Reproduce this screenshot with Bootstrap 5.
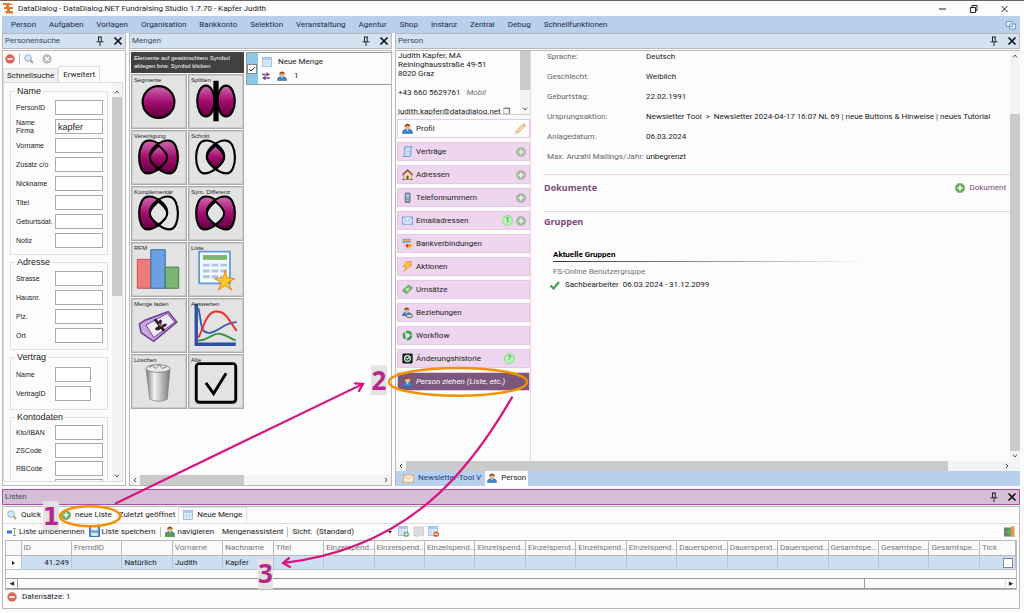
<!DOCTYPE html>
<html lang="de">
<head>
<meta charset="utf-8">
<meta name="viewport" content="width=device-width, initial-scale=1">
<title>DataDialog</title>
<link href="https://cdn.jsdelivr.net/npm/bootstrap@5.3.0/dist/css/bootstrap.min.css" rel="stylesheet">
<style>
:root{--line:#b9b9b9;--blue:#b8d0eb;--head:#d3e3f2;--thumb:#cbcacb}
body{font:8px/12px Roboto,"Open Sans",sans-serif;color:#222;background:#fcfcfc;overflow:hidden}
button,input,select{font:inherit;color:inherit}
button{border:0;background:none;padding:0;text-align:left;white-space:nowrap}
svg{display:block;flex:none}
.app{border-top:1px solid #666}
.titlebar{height:15px;padding:0 14px 0 3px}
.menubar{height:17px;margin:0 4px 0 2px;padding-left:9px;gap:13px;background:var(--blue)}
.menubar a{color:#1d2b45;text-decoration:none}
.docks{gap:3px;margin:0 4px 3px 2px}
.dock{min-width:0;min-height:0}
.dock-head{height:16px;flex:none;padding:0 2px 0 2px;background:var(--head);border:1px solid var(--line);color:#3a4656}
.dock-body{border:1px solid var(--line);margin-top:1px;min-height:0}
.tools{gap:9px}
.dock-search{width:124px}
.dock-sets{width:263px}
.vbar{width:10px;flex:none;background:#f4f4f4}
.vbar i,.hbar i{display:block;background:var(--thumb)}
.hbar{height:10px;flex:none;background:#f4f4f4}
.hbar i{height:10px}
.end{width:10px;height:10px}
.search-tools{height:16px;padding:0 2px;gap:4px}
.rule{width:1px;height:10px;background:#bbb}
.tab-off{height:14px;padding:0 3px;background:#f1f1f1;border:1px solid #ddd;border-bottom:0}
.tab-on{height:16px;padding:0 4px;background:#fcfcfc;border:1px solid #ddd;border-bottom:0}
.sheet{border:1px solid #ddd;min-height:0;margin:0 2px 3px 0}
.fields{font:7px/8px "Liberation Sans",Arial,sans-serif;padding:3px 4px 0 6px}
.fields fieldset{border:1px solid #e0e0e0;padding:4px 3px 6px 5px;margin-bottom:2px;min-width:0}
.fields legend{float:none;width:auto;font-size:9px;line-height:10px;padding:0 2px;margin:0 0 0 -1px}
.field{height:15px;margin-bottom:4px}
.field:last-child{margin-bottom:0}
.field label{width:39px;flex:none;white-space:nowrap}
.field input{height:15px;width:48px;min-width:0;border:1px solid #aaa;background:#fff;padding:0 2px;border-radius:0;font-size:9px}
.field .short{width:36px}
.fields .roomy{padding-top:5px;padding-bottom:8px}
.fields .tight{padding-top:3px}
.tight .field{margin-bottom:3px}
.set-tools{width:113px;font:6px/8px "Liberation Sans",Arial,sans-serif}
.hint{background:#414141;color:#fff;padding:2px 3px;height:21px}
.tiles{display:grid;grid-template-columns:1fr 1fr;gap:1px;margin-top:1px}
.tile{position:relative;height:55px;border:1px solid #aaa;outline:1px solid #ccc;outline-offset:-2px;background:#e3e3e3}
.tile span{position:absolute;left:2px;top:1px;z-index:1}
.tile svg{width:100%;height:100%}
.set-item{height:33px;border:1px solid #999;border-right:0}
.set-check{width:11px;background:#8cc8e8}
input[type=checkbox]{appearance:none;margin:0;width:10px;height:10px;flex:none;border:1px solid #888;background:#fff}
input[type=checkbox]:checked{background:#fff url("data:image/svg+xml,%3Csvg xmlns='http://www.w3.org/2000/svg' viewBox='0 0 8 8'%3E%3Cpath d='M1 4l2 2 4-4' fill='none' stroke='%23222'/%3E%3C/svg%3E")}
.person-nav{width:135px;border-right:1px solid #eed6ee}
.address{height:64px;overflow:hidden;line-height:9px;border-bottom:1px solid #ccc}
.address p{margin:0 0 10px 2px;white-space:nowrap}
.nav-list{padding-top:4px}
.nav-btn{height:19px;margin:0 0 4px 1px;padding:0 3px 0 4px;gap:3px;background:#efd6ef;border:1px solid #e6c8e6;display:flex;align-items:center;width:133px}
.nav-btn svg:first-child{width:11px;height:11px}
.nav-btn.plain{background:#fdfdfd}
.nav-btn.dark{background:#7c577c;color:#fff;font-style:italic}
.count{width:11px;height:11px;border-radius:50%;background:#b4f5b4;border:1px solid #8edb8e;font-size:7px;line-height:9px;text-align:center;color:#2a6b2a}
.facts{display:grid;grid-template-columns:99px 1fr;row-gap:8px;margin:0 0 0 16px}
.facts dt{font-weight:400;color:#666}
.facts dd{margin:0;white-space:nowrap}
.block-head{border-top:1px solid #ead2ea;margin-left:13px;color:#7a4a7a}
.block-head h2{font:700 9px/12px "Open Sans",sans-serif;margin:0}
.docs-head{margin-top:11px;padding:7px 0 17px}
.groups{margin:21px 0 0 22px}
.groups h3{font-size:8px;line-height:12px;font-weight:700;margin:0;color:#000}
.fade-line{height:1px;width:320px;max-width:100%;background:linear-gradient(90deg,#333,#aaa 60%,#fff)}
.group-name{margin:4px 0 1px}
.group-role{gap:5px;margin-left:-4px}
.doc-tabs{height:15px;background:var(--blue);padding-left:7px;color:#1c3a8c}
.doc-tabs .active-doc{background:#fcfcfc;color:#222;height:15px;padding:0 2px}
.lists{margin:0 4px 4px 2px}
.lists .dock-head{background:#d6bfd6;border:1px solid #a94fa9}
.list-tabs{height:17px;border-bottom:1px solid #ddd;gap:3px}
.list-tools{height:16px}
.list-tools select{appearance:none;border:0;background:none;width:70px;padding:0}
.grid-box{margin:0 2px;border:1px solid var(--line)}
.grid-box table{table-layout:fixed;width:100%;border-collapse:collapse;line-height:12px}
.grid-box th{font-weight:400;color:#777;border:solid var(--line);border-width:0 1px 1px 0;height:15px;padding:0 0 0 2px;white-space:nowrap;background:#fafafa}
.grid-box td{background:#cdddf2;border:solid #b9c4d4;border-width:0 1px 1px 0;height:14px;padding:0 2px;white-space:nowrap}
.grid-box td:first-child{background:#fcfcfc}
.grid-scroll{height:11px;margin-top:8px;border:1px solid #999;border-width:1px 0}
.grid-scroll i{flex:0 0 84%;border:solid #999;border-width:0 1px}
.grid-scroll b{width:11px;flex:none;text-align:center;font-size:5px;line-height:9px}
.status{gap:5px;padding:1px 0 5px 4px}
.marks{position:absolute;inset:0;width:100%;height:100%;pointer-events:none}
</style>
</head>
<body>
<svg width="0" height="0" class="position-absolute" aria-hidden="true">
<defs>
<linearGradient id="mg" x1="0" y1="0" x2="0" y2="1"><stop offset="0" stop-color="#cf6cae"/><stop offset=".5" stop-color="#a50d70"/><stop offset="1" stop-color="#5e003f"/></linearGradient>
<linearGradient id="can" x1="0" x2="1"><stop offset="0" stop-color="#777"/><stop offset=".35" stop-color="#f4f4f4"/><stop offset="1" stop-color="#777"/></linearGradient>
<symbol id="pin" viewBox="0 0 8 10"><path d="M2 1h4M2.500 1v4.500M5.200 1v4.500M.5 5.800h7M4 6v4" stroke="#222" fill="none"/></symbol>
<symbol id="x" viewBox="0 0 10 10"><path d="M1.500 1.500l7 7M8.500 1.500l-7 7" stroke="#111" stroke-width="1.700"/></symbol>
<symbol id="minus" viewBox="0 0 10 10"><circle cx="5" cy="5" r="4.700" fill="#e2645c"/><path d="M2.500 5h5" stroke="#fff" stroke-width="1.800"/></symbol>
<symbol id="plus" viewBox="0 0 10 10"><circle cx="5" cy="5" r="4.600" fill="#69b45a" stroke="#4b8d42" stroke-width=".5"/><path d="M2.500 5h5M5 2.500v5" stroke="#fff" stroke-width="1.600"/></symbol>
<symbol id="plusg" viewBox="0 0 10 10"><circle cx="5" cy="5" r="4.600" fill="#a9bba5" stroke="#98a894" stroke-width=".5"/><path d="M2.500 5h5M5 2.500v5" stroke="#eef3ec" stroke-width="1.600"/></symbol>
<symbol id="off" viewBox="0 0 10 10"><circle cx="5" cy="5" r="4.700" fill="#b9b9b9"/><path d="M3 3l4 4M7 3l-4 4" stroke="#fff" stroke-width="1.300"/></symbol>
<symbol id="lens" viewBox="0 0 10 10"><path d="M6 6l3 3" stroke="#c49a6a" stroke-width="2"/><circle cx="4" cy="4" r="3.300" fill="#d5e9fb" stroke="#8bb3dc"/></symbol>
<symbol id="man" viewBox="0 0 10 10"><path d="M.5 9.500C.3 6.500 2 5.500 5 5.500s4.700 1 4.500 4z" fill="#3f86cf" stroke="#245b9a" stroke-width=".5"/><path d="M4 5.500l1 2 1-2z" fill="#fff"/><circle cx="5" cy="3.300" r="2.500" fill="#f0b57c"/><path d="M2.300 3.500C2-.4 8-.4 7.700 3.500 6.500 2 4.500 2.500 2.300 3.500z" fill="#8a4f1c"/></symbol>
<symbol id="rel" viewBox="0 0 10 10"><use href="#man" width="8.500" height="8.500"/><rect x="4" y="6.500" width="5.500" height="3" rx="1.500" fill="#ddd" stroke="#555" stroke-width=".8"/></symbol>
<symbol id="navi" viewBox="0 0 10 10"><use href="#man" width="9" height="9"/><path d="M0 6h6l3 3v1H0z" fill="#58a045"/></symbol>
<symbol id="tbl" viewBox="0 0 10 10"><rect x=".5" y=".5" width="9" height="9" fill="#e6f1fc" stroke="#8fb5df" stroke-width=".8"/><path d="M1 2h8" stroke="#9fc0e6" stroke-width="1.600"/><path d="M3.500 3v6M6.500 3v6M1 5h8M1 7h8" stroke="#b5d0ec" stroke-width=".6"/></symbol>
<symbol id="tbladd" viewBox="0 0 10 10"><use href="#tbl" width="9" height="9"/><use href="#plus" x="5" y="5" width="5" height="5"/></symbol>
<symbol id="tbldel" viewBox="0 0 10 10"><use href="#tbl" width="9" height="9"/><circle cx="7.500" cy="7.500" r="2.500" fill="#e0622c"/><path d="M6 7.500h3" stroke="#fff"/></symbol>
<symbol id="swap" viewBox="0 0 8 10"><path d="M0 3.500h5M3 7H8" stroke="#7c4a8c" stroke-width="1.600"/><path d="M4.500 1L8 3.500 4.500 5.500zM3.500 4.500L0 7l3.500 2.500z" fill="#7c4a8c"/></symbol>
<symbol id="pen" viewBox="0 0 10 10"><path d="M.5 9.500l1-3L7.500.8l2 2L3.500 8.500z" fill="#f3d9a0" stroke="#cfa566" stroke-width=".6"/><path d="M7 1.300L8 .3l2 2-1 1z" fill="#e9a3a0"/></symbol>
<symbol id="scroll" viewBox="0 0 10 10"><path d="M2.500.8h7L8 2v6.500L6.500 9.500H.8L2.500 8z" fill="#d5e8fb" stroke="#5a8fc9" stroke-width=".8"/><path d="M4 3h3M4 5h3M4 7h3" stroke="#8fb8e4" stroke-width=".6"/></symbol>
<symbol id="house" viewBox="0 0 10 10"><path d="M1.500 5L5 2l3.500 3v4.500h-7z" fill="#f2e2c4" stroke="#7a6a4a" stroke-width=".5"/><path d="M.3 5.500L5 1l4.700 4.500" fill="none" stroke="#a8502c" stroke-width="1.400"/><rect x="4" y="6" width="2" height="3.500" fill="#7b4a22"/><path d="M0 9.500h3M7 9.500h3" stroke="#4f9d3d"/></symbol>
<symbol id="phone" viewBox="0 0 10 10"><rect x="2.800" y=".8" width="4.600" height="8.800" rx=".8" fill="#7c8896" stroke="#4d5762" stroke-width=".5"/><rect x="3.600" y="2" width="3" height="3" fill="#8fd0f5"/><path d="M3.600 6.200h3M3.600 7.700h3" stroke="#ccc" stroke-width=".7"/></symbol>
<symbol id="mail" viewBox="0 0 10 10"><rect x=".4" y="1.800" width="9.200" height="6.600" fill="#e6f2fd" stroke="#6d9ed0" stroke-width=".8"/><path d="M.8 2.300L5 5.800l4.200-3.500M.8 8l3-3M9.200 8l-3-3" fill="none" stroke="#6d9ed0" stroke-width=".7"/></symbol>
<symbol id="mailo" viewBox="0 0 10 10"><rect x=".4" y="1.800" width="9.200" height="6.600" fill="#fdf0dc" stroke="#e2a35d" stroke-width=".8"/><path d="M.8 2.300L5 5.800l4.200-3.500" fill="none" stroke="#e2a35d" stroke-width=".7"/></symbol>
<symbol id="bank" viewBox="0 0 10 10"><rect x=".5" y=".8" width="7.500" height="4" fill="#6ba6df"/><path d="M.5 2.200h7.500" stroke="#f6b04a"/><rect x="2.500" y="4.500" width="7" height="5" fill="#fff" stroke="#bbb" stroke-width=".5"/><circle cx="5" cy="7" r="1.800" fill="#dc3a33"/><circle cx="7.200" cy="7" r="1.800" fill="#f2a02e"/></symbol>
<symbol id="bolt" viewBox="0 0 10 10"><path d="M4 .5h5L6.800 3.500h2.400L1.500 9.700 4 5.500H.8z" fill="#fbbd3a" stroke="#e08c1c" stroke-width=".5"/></symbol>
<symbol id="cash" viewBox="0 0 10 10"><path d="M.5 6L6 1l3.500 2.500L4 9z" fill="#79c47b" stroke="#3f8f49" stroke-width=".7"/><circle cx="5" cy="5" r="1.300" fill="#cdeccb"/></symbol>
<symbol id="flow" viewBox="0 0 10 10"><circle cx="5" cy="5" r="3.300" fill="none" stroke="#24a53b" stroke-width="2.200" stroke-dasharray="5.600 1.300"/></symbol>
<symbol id="hist" viewBox="0 0 10 10"><rect x=".3" y=".5" width="9.400" height="9" rx="1" fill="#16211f"/><circle cx="5" cy="5" r="2.600" fill="none" stroke="#dfe"/><path d="M3.500 4.500l1.500 1L7.500 3" stroke="#dfe" fill="none"/></symbol>
<symbol id="ok" viewBox="0 0 10 10"><path d="M1 5.500l3 3L9.500 2" stroke="#3fa545" stroke-width="2.200" fill="none"/></symbol>
<symbol id="disk" viewBox="0 0 10 10"><rect x=".5" y=".5" width="9" height="9" rx=".5" fill="#5f9ad8" stroke="#3d72b4"/><rect x="2" y="1" width="6" height="3" fill="#e5f0fb"/><rect x="2" y="6" width="6" height="3" fill="#d9ecd0"/></symbol>
<symbol id="ren" viewBox="0 0 10 10"><rect x="0" y="3.500" width="5" height="3" fill="#3b78c4"/><path d="M6 1.500h3M7.500 1.500v7M6 8.500h3" stroke="#777" stroke-width=".7"/></symbol>
<symbol id="note" viewBox="0 0 10 10"><path d="M1 .8h8.500v8L7 8 4.500 9.500 1 9z" fill="#dcdcdc" stroke="#c2c2c2" stroke-width=".6"/></symbol>
<symbol id="door" viewBox="0 0 11 11"><rect x="0" y="1.500" width="7" height="9" fill="#6d8370"/><path d="M6.500 1l4-1v11l-4-.5z" fill="#d79a52"/><path d="M1 6h5M4 4l2.500 2L4 8" stroke="#4fc04f" stroke-width="1.500" fill="none"/></symbol>
<symbol id="up" viewBox="0 0 10 10"><path d="M3 6.500l2-2.500 2 2.500" fill="none" stroke="#555"/></symbol>
<symbol id="dn" viewBox="0 0 10 10"><path d="M3 3.500L5 6l2-2.500" fill="none" stroke="#555"/></symbol>
<symbol id="lt" viewBox="0 0 10 10"><path d="M6 3L4 5l2 2" fill="none" stroke="#444"/></symbol>
<symbol id="rt" viewBox="0 0 10 10"><path d="M4 3l2 2-2 2" fill="none" stroke="#444"/></symbol>
</defs>
</svg>

<div class="app vh-100 d-flex flex-column position-relative">
<header class="titlebar d-flex align-items-center flex-shrink-0">
<svg width="11" height="11" viewBox="0 0 11 11"><path d="M0 0h7l3 2H6v2H3V2H0zM1 4h9v2H7v2H4V6H1zM2 8h8v2.500H3z" fill="#e5792b"/></svg>
<span class="ms-1">DataDialog - DataDialog.NET Fundraising Studio 1.7.70 - Kapfer Judith</span>
<svg class="ms-auto" width="74" height="10" viewBox="0 0 74 10"><path d="M3 5h7M34.500 3.500h5v5h-5zM36 3.500v-2h5v5h-1.500M65.500 2l6 6M71.500 2l-6 6" fill="none" stroke="#222"/></svg>
</header>
<nav class="menubar d-flex align-items-center flex-shrink-0" id="menu">
<a href="#">Person</a><a href="#">Aufgaben</a><a href="#">Vorlagen</a><a href="#">Organisation</a><a href="#">Bankkonto</a><a href="#">Selektion</a><a href="#">Veranstaltung</a><a href="#">Agentur</a><a href="#">Shop</a><a href="#">Instanz</a><a href="#">Zentral</a><a href="#">Debug</a><a href="#">Schnellfunktionen</a>
<svg class="ms-auto me-1" width="10" height="10" viewBox="0 0 10 10"><path d="M.5 1.500h6v5h-6zM3.500 4h6v5h-6z" fill="#eaf3fc" stroke="#7b9fcb"/></svg>
</nav>

<main class="docks d-flex flex-grow-1 dock">
<section class="dock dock-search d-flex flex-column flex-shrink-0">
<div class="dock-head d-flex align-items-center"><span class="me-auto">Personensuche</span><div class="d-flex tools"><svg width="8" height="10"><use href="#pin"/></svg><svg width="10" height="10"><use href="#x"/></svg></div></div>
<div class="dock-body flex-grow-1 d-flex flex-column">
<div class="search-tools d-flex align-items-center"><svg width="10" height="10"><use href="#minus"/></svg><span class="rule"></span><svg width="10" height="10"><use href="#lens"/></svg><svg class="ms-1" width="10" height="10"><use href="#off"/></svg></div>
<div class="d-flex align-items-end"><button class="tab-off">Schnellsuche</button><button class="tab-on">Erweitert</button></div>
<div class="sheet flex-grow-1 d-flex">
<form class="fields flex-grow-1 overflow-hidden">
<fieldset><legend>Name</legend>
<div class="field d-flex align-items-center"><label for="f1">PersonID</label><input id="f1"></div>
<div class="field d-flex align-items-center"><label for="f2">Name<br>Firma</label><input id="f2" value="kapfer"></div>
<div class="field d-flex align-items-center"><label for="f3">Vorname</label><input id="f3"></div>
<div class="field d-flex align-items-center"><label for="f4">Zusatz c/o</label><input id="f4"></div>
<div class="field d-flex align-items-center"><label for="f5">Nickname</label><input id="f5"></div>
<div class="field d-flex align-items-center"><label for="f6">Titel</label><input id="f6"></div>
<div class="field d-flex align-items-center"><label for="f7">Geburtsdat.</label><input id="f7"></div>
<div class="field d-flex align-items-center"><label for="f8">Notiz</label><input id="f8"></div>
</fieldset>
<fieldset><legend>Adresse</legend>
<div class="field d-flex align-items-center"><label for="f9">Strasse</label><input id="f9"></div>
<div class="field d-flex align-items-center"><label for="f10">Hausnr.</label><input id="f10"></div>
<div class="field d-flex align-items-center"><label for="f11">Plz.</label><input id="f11"></div>
<div class="field d-flex align-items-center"><label for="f12">Ort</label><input id="f12"></div>
</fieldset>
<fieldset class="roomy"><legend>Vertrag</legend>
<div class="field d-flex align-items-center"><label for="f13">Name</label><input id="f13" class="short"></div>
<div class="field d-flex align-items-center"><label for="f14">VertragID</label><input id="f14" class="short"></div>
</fieldset>
<fieldset class="tight"><legend>Kontodaten</legend>
<div class="field d-flex align-items-center"><label for="f15">Kto/IBAN</label><input id="f15"></div>
<div class="field d-flex align-items-center"><label for="f16">ZSCode</label><input id="f16"></div>
<div class="field d-flex align-items-center"><label for="f17">RBCode</label><input id="f17"></div>
<div class="field d-flex align-items-center"><label></label><input aria-label="Konto"></div>
</fieldset>
</form>
<div class="vbar d-flex flex-column"><svg class="end mt-1" viewBox="0 0 10 10"><use href="#up"/></svg><i class="h-50"></i><svg class="end mt-auto" viewBox="0 0 10 10"><use href="#dn"/></svg></div>
</div>
</div>
</section>

<section class="dock dock-sets d-flex flex-column flex-shrink-0">
<div class="dock-head d-flex align-items-center"><span class="me-auto">Mengen</span><div class="d-flex tools"><svg width="8" height="10"><use href="#pin"/></svg><svg width="10" height="10"><use href="#x"/></svg></div></div>
<div class="dock-body flex-grow-1 d-flex flex-column">
<div class="d-flex flex-grow-1" style="gap:2px;padding:1px 0 0 1px">
<div class="set-tools flex-shrink-0">
<div class="hint">Elemente auf gewünschtem Symbol<br>ablegen bzw. Symbol klicken</div>
<div class="tiles">
<button class="tile"><span>Segmente</span><svg viewBox="0 0 55 55"><circle cx="27" cy="28" r="16.500" fill="url(#mg)" stroke="#000" stroke-width="2.200"/></svg></button>
<button class="tile"><span>Splitten</span><svg viewBox="0 0 55 55"><g fill="url(#mg)" stroke="#000" stroke-width="2.200"><ellipse cx="17" cy="27" rx="9" ry="16"/><ellipse cx="38" cy="27" rx="9" ry="16"/></g><path d="M27.500 6v42" stroke="#000" stroke-width="5.500"/></svg></button>
<button class="tile"><span>Vereinigung</span><svg viewBox="0 0 55 55"><g fill="url(#mg)" stroke="#000" stroke-width="2.200"><path d="M16 10C4 11 4 43 15 44c9 0 21-10 21-18S24 9 16 10z"/><path d="M38 10c12 1 12 33 1 34-9 0-21-10-21-18S30 9 38 10z"/><path d="M27 15c12 10 12 15 0 24-12-9-12-14 0-24z"/></g></svg></button>
<button class="tile"><span>Schnitt</span><svg viewBox="0 0 55 55"><g fill="none" stroke="#000" stroke-width="2.200"><path d="M27 15c12 10 12 15 0 24-12-9-12-14 0-24z" fill="url(#mg)"/><path d="M16 10C4 11 4 43 15 44c9 0 21-10 21-18S24 9 16 10z"/><path d="M38 10c12 1 12 33 1 34-9 0-21-10-21-18S30 9 38 10z"/></g></svg></button>
<button class="tile"><span>Komplementär</span><svg viewBox="0 0 55 55"><g fill="none" stroke="#000" stroke-width="2.200"><path d="M16 10C4 11 4 43 15 44c9 0 21-10 21-18S24 9 16 10z" fill="url(#mg)"/><path d="M38 10c12 1 12 33 1 34-9 0-21-10-21-18S30 9 38 10z"/><path d="M27 15c12 10 12 15 0 24-12-9-12-14 0-24z" fill="#e3e3e3"/></g></svg></button>
<button class="tile"><span>Sym. Differenz</span><svg viewBox="0 0 55 55"><g fill="url(#mg)" stroke="#000" stroke-width="2.200"><path d="M16 10C4 11 4 43 15 44c9 0 21-10 21-18S24 9 16 10z"/><path d="M38 10c12 1 12 33 1 34-9 0-21-10-21-18S30 9 38 10z"/><path d="M27 15c12 10 12 15 0 24-12-9-12-14 0-24z" fill="#e3e3e3"/></g></svg></button>
<button class="tile"><span>RFM</span><svg viewBox="0 0 55 55"><path d="M5 17h14v30H5z" fill="#f07a78" stroke="#cc4a48"/><path d="M19 7h15v40H19z" fill="#6a9fe0" stroke="#3465a8"/><path d="M34 25h14v22H34z" fill="#79b579" stroke="#3f7f42"/></svg></button>
<button class="tile"><span>Liste</span><svg viewBox="0 0 55 55"><path d="M10 9h32v33H10z" fill="#f5faff" stroke="#5b9bd5" stroke-width="1.800"/><path d="M14 15h25" stroke="#7fb56e" stroke-width="5"/><path d="M14 23h25M14 29h25M14 35h20" stroke="#a9c6e6" stroke-width="3" stroke-dasharray="7 2"/><path d="M37 28l2 8 8 1-7 4 4 8-7-5-7 5 3-8-7-4 9-1z" fill="#ffc928" stroke="#dd8a1c"/></svg></button>
<button class="tile"><span>Menge laden</span><svg viewBox="0 0 55 55"><path d="M7 26l6-4 24-9 9 11-24 20-13-9z" fill="#c9a6dc" stroke="#6c3a94" stroke-width="1.500"/><path d="M14 27l22-12 8 9-22 16z" fill="#f3ebf8" stroke="#6c3a94"/><path d="M24 22l8 10M25 31l9-4M29 23l-2 8" stroke="#222" stroke-width="3" stroke-linecap="round"/><path d="M27 26l4 2" stroke="#c65cab" stroke-width="2"/></svg></button>
<button class="tile"><span>Auswerten</span><svg viewBox="0 0 55 55" fill="none"><path d="M7 5v42h41" stroke="#2d509f" stroke-width="3.500"/><path d="M9 9c4 14 1 28 13 26 10-2 12-10 27-11" stroke="#3a5bb0" stroke-width="2"/><path d="M9 40C13 36 16 14 27 13s14 10 22 20" stroke="#f22a2a" stroke-width="2"/><path d="M9 43c12 0 14-8 22-7 9 1 10 5 17 7" stroke="#3d9440" stroke-width="2"/></svg></button>
<button class="tile"><span>Löschen</span><svg viewBox="0 0 55 55"><path d="M14 14l4 32q9 4 18 0l3-32z" fill="url(#can)" stroke="#777" stroke-width=".7"/><ellipse cx="26.500" cy="14" rx="12.500" ry="4" fill="#e9e9e9" stroke="#888"/><path d="M17 13l4-2 3 3 4-4 3 4 5-2" stroke="#777" fill="none"/></svg></button>
<button class="tile"><span>Alle</span><svg viewBox="0 0 55 55"><rect x="7" y="9" width="41" height="40" rx="3" fill="#e3e3e3" stroke="#000" stroke-width="3"/><path d="M17 29l8 11 13-21" fill="none" stroke="#000" stroke-width="3"/></svg></button>
</div>
</div>
<div class="flex-grow-1">
<div class="set-item d-flex">
<label class="set-check d-flex align-items-center"><input type="checkbox" checked aria-label="Neue Menge"></label>
<div class="ps-1 flex-grow-1">
<div class="d-flex align-items-center" style="gap:6px;padding-top:3px"><svg width="10" height="10"><use href="#tbl"/></svg>Neue Menge</div>
<div class="d-flex align-items-center" style="gap:7px;padding-top:2px"><svg width="8" height="10"><use href="#swap"/></svg><svg width="10" height="10"><use href="#man"/></svg>1</div>
</div>
</div>
</div>
</div>
<div class="hbar d-flex"><svg class="end" viewBox="0 0 10 10"><use href="#lt"/></svg><i style="width:104px"></i><svg class="end ms-auto" viewBox="0 0 10 10"><use href="#rt"/></svg></div>
</div>
</section>

<section class="dock flex-grow-1 d-flex flex-column">
<div class="dock-head d-flex align-items-center"><span class="me-auto">Person</span><div class="d-flex tools"><svg width="8" height="10"><use href="#pin"/></svg><svg width="10" height="10"><use href="#x"/></svg></div></div>
<div class="dock-body flex-grow-1 d-flex flex-column border-bottom-0 border-end-0">
<div class="flex-grow-1 d-flex dock">
<div class="person-nav flex-shrink-0">
<div class="address d-flex">
<div class="flex-grow-1"><p>Judith Kapfer, MA<br>Reininghausstraße 49-51<br>8020 Graz</p><p>+43 660 5629761 <i class="ms-1 text-secondary">Mobil</i></p><p>judith.kapfer@datadialog.net ❐</p></div>
<div class="vbar d-flex flex-column"><i style="height:39px"></i><svg class="end mt-auto" viewBox="0 0 10 10"><use href="#dn"/></svg></div>
</div>
<div class="nav-list">
<button class="nav-btn plain"><svg><use href="#man"/></svg><span class="me-auto">Profil</span><svg width="11" height="11"><use href="#pen"/></svg></button>
<button class="nav-btn"><svg><use href="#scroll"/></svg><span class="me-auto">Verträge</span><svg width="10" height="10"><use href="#plusg"/></svg></button>
<button class="nav-btn"><svg><use href="#house"/></svg><span class="me-auto">Adressen</span><svg width="10" height="10"><use href="#plusg"/></svg></button>
<button class="nav-btn"><svg><use href="#phone"/></svg><span class="me-auto">Telefonnummern</span><svg width="10" height="10"><use href="#plusg"/></svg></button>
<button class="nav-btn"><svg><use href="#mail"/></svg><span class="me-auto">Emailadressen</span><span class="count">1</span><svg width="10" height="10"><use href="#plusg"/></svg></button>
<button class="nav-btn"><svg><use href="#bank"/></svg><span>Bankverbindungen</span></button>
<button class="nav-btn"><svg><use href="#bolt"/></svg><span>Aktionen</span></button>
<button class="nav-btn"><svg><use href="#cash"/></svg><span>Umsätze</span></button>
<button class="nav-btn"><svg><use href="#rel"/></svg><span>Beziehungen</span></button>
<button class="nav-btn"><svg><use href="#flow"/></svg><span>Workflow</span></button>
<button class="nav-btn"><svg><use href="#hist"/></svg><span class="me-auto">Änderungshistorie</span><span class="count me-2">?</span><span></span></button>
<button class="nav-btn dark"><svg><use href="#man"/></svg><span>Person ziehen (Liste, etc.)</span></button>
</div>
</div>
<div class="flex-grow-1 dock">
<dl class="facts">
<dt>Sprache:</dt><dd>Deutsch</dd>
<dt>Geschlecht:</dt><dd>Weiblich</dd>
<dt>Geburtstag:</dt><dd>22.02.1991</dd>
<dt>Ursprungsaktion:</dt><dd>Newsletter Tool &nbsp;&gt;&nbsp; Newsletter 2024-04-17 16:07 NL 69 | neue Buttons &amp; Hinweise | neues Tutorial</dd>
<dt>Anlagedatum:</dt><dd>06.03.2024</dd>
<dt class="text-nowrap">Max. Anzahl Mailings/Jahr:</dt><dd>unbegrenzt</dd>
</dl>
<div class="block-head docs-head d-flex align-items-center"><h2>Dokumente</h2><button class="ms-auto d-flex align-items-center gap-1 pe-1"><svg width="10" height="10"><use href="#plus"/></svg>Dokument</button></div>
<div class="block-head pt-1"><h2>Gruppen</h2></div>
<div class="groups">
<h3>Aktuelle Gruppen</h3><div class="fade-line"></div>
<div class="group-name text-secondary">FS-Online Benutzergruppe</div>
<div class="group-role d-flex align-items-center"><svg width="11" height="10"><use href="#ok"/></svg><span>Sachbearbeiter &nbsp;06.03.2024 - 31.12.2099</span></div>
</div>
</div>
<div class="vbar d-flex flex-column"><svg class="end" viewBox="0 0 10 10"><use href="#up"/></svg><i class="flex-grow-1" style="margin-top:53px"></i><svg class="end" viewBox="0 0 10 10"><use href="#dn"/></svg></div>
</div>
<div class="hbar d-flex pe-2"><svg class="end" viewBox="0 0 10 10"><use href="#lt"/></svg><i style="width:88%"></i><svg class="end ms-auto" viewBox="0 0 10 10"><use href="#rt"/></svg></div>
<div class="doc-tabs d-flex align-items-center flex-shrink-0"><button class="d-flex align-items-center gap-1 pe-1"><svg width="11" height="11"><use href="#mailo"/></svg>Newsletter-Tool V</button><button class="active-doc d-flex align-items-center gap-1"><svg width="10" height="10"><use href="#man"/></svg>Person</button></div>
</div>
</section>
</main>

<section class="lists flex-shrink-0">
<div class="dock-head d-flex align-items-center"><span class="me-auto">Listen</span><div class="d-flex tools"><svg width="8" height="10"><use href="#pin"/></svg><svg width="10" height="10"><use href="#x"/></svg></div></div>
<div class="dock-body">
<div class="list-tabs d-flex align-items-center px-1">
<button class="d-flex align-items-center gap-1"><svg width="10" height="10"><use href="#lens"/></svg>Quick</button>
<button class="d-flex align-items-center gap-1" style="margin-left:17px"><svg width="10" height="10"><use href="#plus"/></svg>neue Liste</button>
<button class="ms-1">Zuletzt geöffnet</button>
<button class="tab-on d-flex align-items-center gap-1"><svg width="10" height="10"><use href="#tbl"/></svg>Neue Menge</button>
</div>
<div class="list-tools d-flex align-items-center ps-1 pe-1">
<button class="d-flex align-items-center" style="gap:2px"><svg width="10" height="10"><use href="#ren"/></svg>Liste umbenennen</button>
<button class="d-flex align-items-center ms-1" style="gap:2px"><svg width="11" height="11"><use href="#disk"/></svg>Liste speichern</button>
<span class="rule mx-1"></span>
<button class="d-flex align-items-center" style="gap:2px"><svg width="11" height="11"><use href="#navi"/></svg>navigieren</button>
<button class="ms-2">Mengenassistent</button>
<span class="rule mx-1"></span>
<label for="view" class="me-1">Sicht:</label>
<select id="view"><option>(Standard)</option></select>
<svg width="8" height="8" viewBox="0 0 8 8"><path d="M2 3h4L4 5.500z" fill="#222"/></svg>
<svg class="ms-1" width="11" height="11"><use href="#tbladd"/></svg><svg class="ms-1" width="11" height="11"><use href="#note"/></svg><svg class="ms-1" width="11" height="11"><use href="#tbldel"/></svg>
<svg class="ms-auto" width="11" height="11"><use href="#door"/></svg>
</div>
<div class="grid-box">
<table>
<colgroup><col style="width:15px"><col span="19"><col style="width:36px"></colgroup>
<thead><tr><th></th><th>ID</th><th>FremdID</th><th></th><th>Vorname</th><th>Nachname</th><th>Titel</th><th>Einzelspend...</th><th>Einzelspend...</th><th>Einzelspend...</th><th>Einzelspend...</th><th>Einzelspend...</th><th>Einzelspend...</th><th>Einzelspend...</th><th>Dauerspend...</th><th>Dauerspend...</th><th>Dauerspend...</th><th>Gesamtspe...</th><th>Gesamtspe...</th><th>Gesamtspe...</th><th>Tick</th></tr></thead>
<tbody><tr><td><svg width="10" height="8" viewBox="0 0 10 8"><path d="M4 2l3 2-3 2z" fill="#222"/></svg></td><td class="text-end">41.249</td><td></td><td>Natürlich</td><td>Judith</td><td>Kapfer</td><td></td><td></td><td></td><td></td><td></td><td></td><td></td><td></td><td></td><td></td><td></td><td></td><td></td><td></td><td><input type="checkbox" class="d-block ms-auto" aria-label="Tick"></td></tr></tbody>
</table>
<div class="grid-scroll d-flex"><b>◀</b><i></i><b class="ms-auto border-start">▶</b></div>
</div>
<div class="status d-flex align-items-center"><svg width="10" height="10"><use href="#minus"/></svg>Datensätze: 1</div>
</div>
</section>

<svg class="marks" viewBox="0 0 1024 613" preserveAspectRatio="none">
<g fill="#e3e3e3"><path d="M43 501h16v29H43zM371 365h16v30h-16zM258 559h15v30h-15z"/></g>
<g fill="#b5278a" font-family="Open Sans,sans-serif" font-weight="700" font-size="26" text-anchor="middle"><text x="51" y="525" font-family="DejaVu Sans,sans-serif" font-size="24">1</text><text x="379" y="390">2</text><text x="265.500" y="583">3</text></g>
<g fill="none" stroke="#f39200" stroke-width="2.500"><ellipse cx="90" cy="516" rx="30" ry="10"/><ellipse cx="458" cy="381.500" rx="69" ry="14"/></g>
<g fill="none" stroke="#d9137f" stroke-width="2.200" stroke-linecap="round"><path d="M116 503L362 384M355 383l8 .5-4 7M512 397C470 470 410 548 283 563M289 558l-6 5 7 4"/></g>
</svg>
</div>
<script src="https://cdn.jsdelivr.net/npm/bootstrap@5.3.0/dist/js/bootstrap.bundle.min.js"></script>
</body>
</html>
